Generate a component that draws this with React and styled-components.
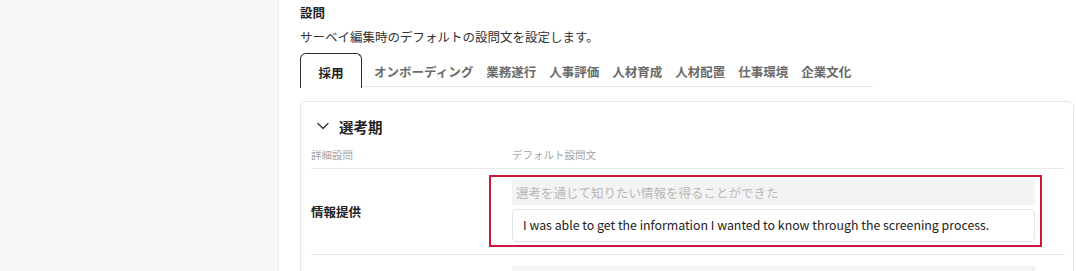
import React from 'react'
import styled, { createGlobalStyle } from 'styled-components'

const GlobalStyle = createGlobalStyle`
  html, body {
    margin: 0;
    padding: 0;
    background: #fff;
  }
  body {
    font-family: "Noto Sans CJK JP", "Noto Sans", sans-serif;
    color: #222;
    overflow: hidden;
  }
`

const tabs = [
  '採用',
  'オンボーディング',
  '業務遂行',
  '人事評価',
  '人材育成',
  '人材配置',
  '仕事環境',
  '企業文化'
]

const rows = [
  {
    label: '情報提供',
    ja: '選考を通じて知りたい情報を得ることができた',
    en: 'I was able to get the information I wanted to know through the screening process.',
    highlight: true
  },
  {
    label: '',
    ja: '',
    en: '',
    highlight: false
  }
]

const Chevron = () => (
  <svg width="12" height="8" viewBox="0 0 12 8" fill="none">
    <path d="M1 1.5 L6 6.5 L11 1.5" stroke="#333" strokeWidth="1.3" strokeLinecap="round" strokeLinejoin="round" />
  </svg>
)

const App = () => (
  <Page>
    <GlobalStyle />
    <Sidebar />
    <Main>
      <Title>設問</Title>
      <Description>サーベイ編集時のデフォルトの設問文を設定します。</Description>
      <TabList>
        {tabs.map((t, i) => (
          <Tab key={t} active={i === 0}>
            {t}
          </Tab>
        ))}
      </TabList>
      <Card>
        <SectionHeader>
          <Chevron />
          <SectionTitle>選考期</SectionTitle>
        </SectionHeader>
        <Grid>
          <HeadCell>詳細設問</HeadCell>
          <HeadCell>デフォルト設問文</HeadCell>
        </Grid>
        {rows.map((r, i) => (
          <Row key={i}>
            <RowLabel>{r.label}</RowLabel>
            <Highlight highlight={r.highlight}>
              <Original>{r.ja}</Original>
              <Input>{r.en}</Input>
            </Highlight>
          </Row>
        ))}
      </Card>
    </Main>
  </Page>
)

const Page = styled.div`
  display: flex;
  height: 271px;
  overflow: hidden;
`

const Sidebar = styled.div`
  width: 278px;
  flex-shrink: 0;
  background: #f7f8fa;
  border-right: 1px solid #ededf0;
`

const Main = styled.div`
  flex: 1;
  padding: 3px 2px 0 21px;
  min-width: 0;
`

const Title = styled.div`
  font-size: 12.5px;
  font-weight: 700;
  line-height: 20px;
`

const Description = styled.div`
  font-size: 12.5px;
  line-height: 20px;
  margin-top: 4px;
  color: #333;
`

const TabList = styled.div`
  display: flex;
  align-items: stretch;
  width: 573px;
  height: 34px;
  margin-top: 6px;
  border-bottom: 1.5px solid #e4e4e8;
  box-sizing: border-box;
`

const Tab = styled.div`
  display: flex;
  align-items: center;
  padding: ${p => (p.active ? '3px 17.5px 0' : '3px 0 0')};
  margin-right: ${p => (p.active ? '12px' : '13px')};
  font-size: 12.5px;
  font-weight: 700;
  color: ${p => (p.active ? '#222' : '#6b6b6b')};
  white-space: nowrap;
  ${p =>
    p.active &&
    `
    border: 1.5px solid #2b2b2b;
    border-bottom: none;
    border-radius: 6px 6px 0 0;
    background: #fff;
    margin-bottom: -1.5px;
  `}
`

const Card = styled.div`
  margin-top: 14px;
  border: 1px solid #e7e7ea;
  border-radius: 6px;
  padding: 13px 8px 0 10px;
`

const SectionHeader = styled.div`
  display: flex;
  align-items: center;
  gap: 10px;
  height: 22px;
  padding-left: 6px;
`

const SectionTitle = styled.div`
  font-size: 14.5px;
  font-weight: 700;
`

const Grid = styled.div`
  display: grid;
  grid-template-columns: 201px 1fr;
  height: 21px;
  margin-top: 10px;
  border-bottom: 1px solid #e9e9ec;
`

const HeadCell = styled.div`
  font-size: 10.5px;
  color: #a4a4a4;
  line-height: 16px;
`

const Row = styled.div`
  display: grid;
  grid-template-columns: 178px 1fr;
  align-items: center;
  padding: 6px 0 7px;
  border-bottom: 1px solid #e9e9ec;
`

const RowLabel = styled.div`
  font-size: 12.5px;
  font-weight: 700;
`

const Highlight = styled.div`
  box-sizing: border-box;
  width: 553px;
  border: 2px solid ${p => (p.highlight ? '#c8193c' : 'transparent')};
  padding: 3px 5px 3px 21px;
`

const Original = styled.div`
  height: 25px;
  background: #f3f3f4;
  color: #b8b8b8;
  font-size: 12.5px;
  line-height: 25px;
  padding-left: 4px;
`

const Input = styled.div`
  height: 33px;
  margin-top: 4px;
  border: 1px solid #e2e2e5;
  border-radius: 5px;
  box-sizing: border-box;
  padding-left: 10px;
  font-size: 12.35px;
  line-height: 31px;
  color: #222;
`

export default App
